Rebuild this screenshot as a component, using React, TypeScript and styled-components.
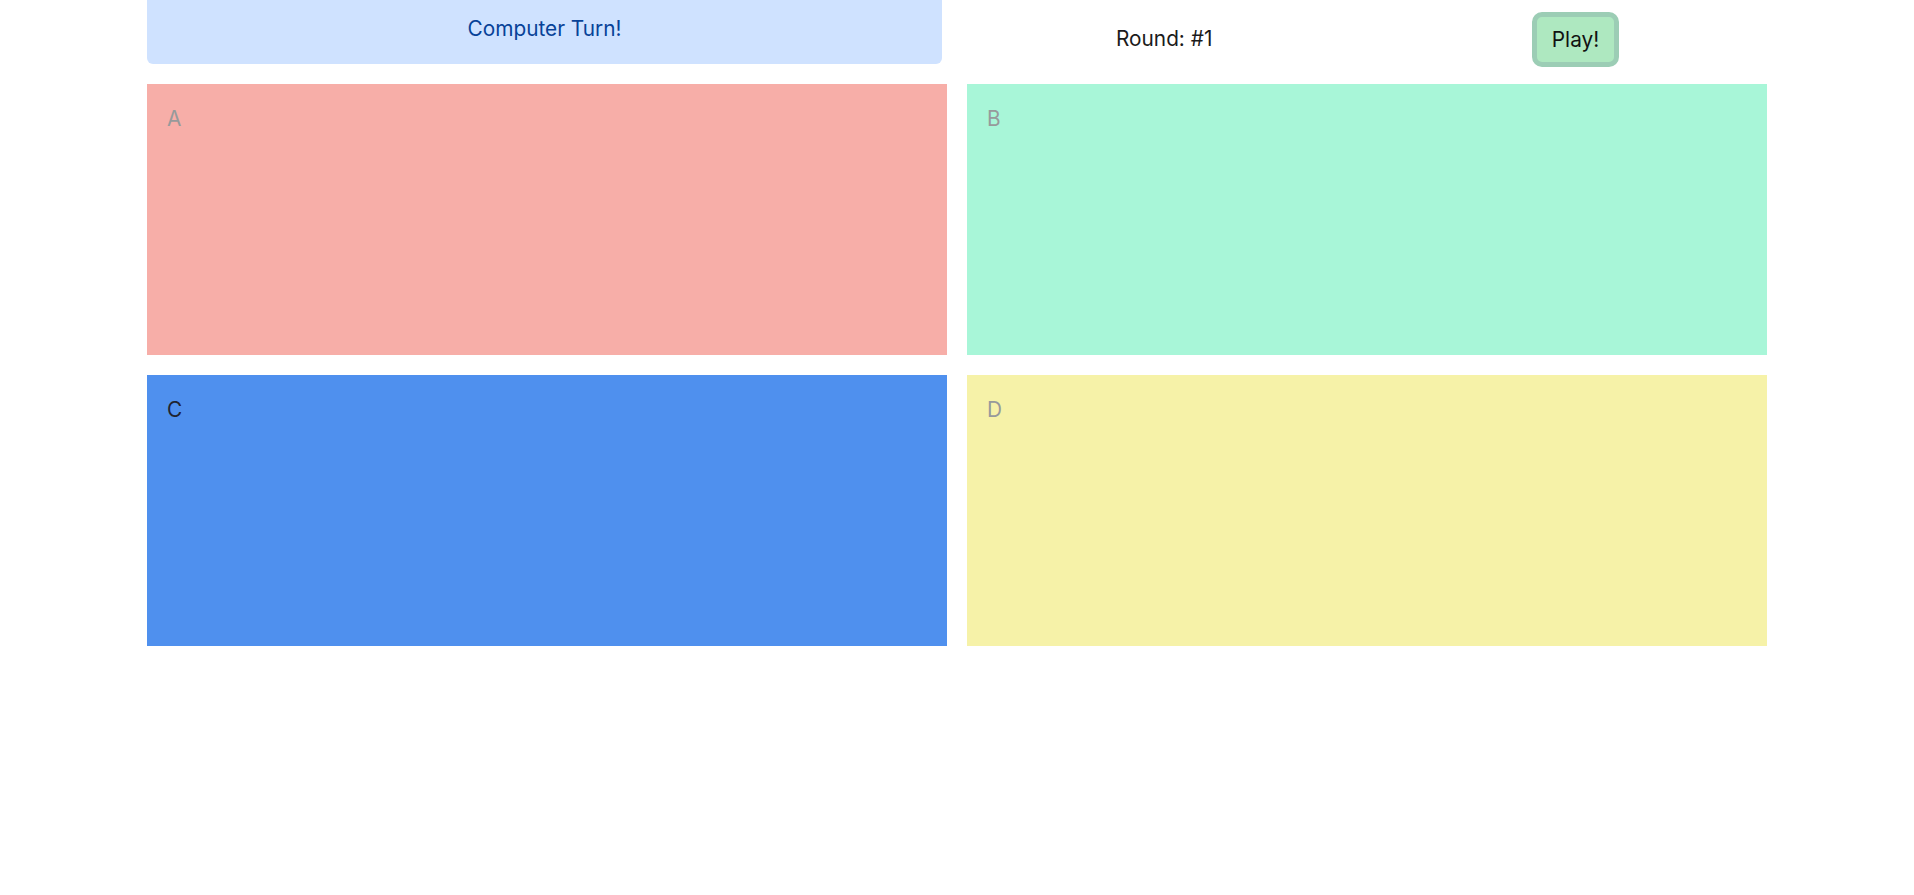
import styled, { createGlobalStyle } from "styled-components";

const GlobalStyle = createGlobalStyle`
  * {
    box-sizing: border-box;
  }

  body {
    margin: 0;
    background: #ffffff;
    font-family: "Inter", "Noto Sans", sans-serif;
    font-size: 20.8px;
    line-height: 1.5;
  }
`;

const Page = styled.main`
  width: 1620px;
  margin: 0 auto;
`;

const Header = styled.header`
  display: grid;
  grid-template-columns: 1fr 1fr;
  column-gap: 20px;
  align-items: start;
`;

const TurnAlert = styled.div`
  height: 64px;
  margin-right: 5px;
  display: flex;
  align-items: center;
  justify-content: center;
  padding-bottom: 6px;
  background: #cfe2ff;
  color: #084298;
  border-radius: 0 0 6px 6px;
`;

const Controls = styled.div`
  display: flex;
  align-items: center;
  justify-content: space-between;
  padding: 12px 148px 0 149px;
`;

const RoundLabel = styled.span`
  color: #1b1b1b;
  margin-top: -2px;
`;

const PlayButton = styled.button`
  width: 87px;
  height: 55px;
  display: flex;
  align-items: center;
  justify-content: center;
  padding: 0;
  font: inherit;
  color: #111111;
  background: #aee8c0;
  border: 5px solid #9ccdb5;
  border-radius: 10px;
  cursor: pointer;
`;

const Board = styled.section`
  display: grid;
  grid-template-columns: 1fr 1fr;
  grid-auto-rows: 271px;
  gap: 20px;
  margin-top: 17px;
`;

const Pad = styled.div<{ $colour: string; $active?: boolean }>`
  padding: 19px 20px;
  background: ${({ $colour }) => $colour};
  color: ${({ $active }) => ($active ? "#1f2430" : "#979a9b")};
  cursor: pointer;
`;

const pads = [
  { label: "A", colour: "#f7aea8" },
  { label: "B", colour: "#a8f6d8" },
  { label: "C", colour: "#4f90ee", active: true },
  { label: "D", colour: "#f6f2a8" },
];

const App = () => {
  return (
    <>
      <GlobalStyle />
      <Page>
        <Header>
          <TurnAlert>Computer Turn!</TurnAlert>
          <Controls>
            <RoundLabel>Round: #1</RoundLabel>
            <PlayButton type="button">Play!</PlayButton>
          </Controls>
        </Header>
        <Board>
          {pads.map((pad) => (
            <Pad key={pad.label} $colour={pad.colour} $active={pad.active}>
              {pad.label}
            </Pad>
          ))}
        </Board>
      </Page>
    </>
  );
};

export default App;
